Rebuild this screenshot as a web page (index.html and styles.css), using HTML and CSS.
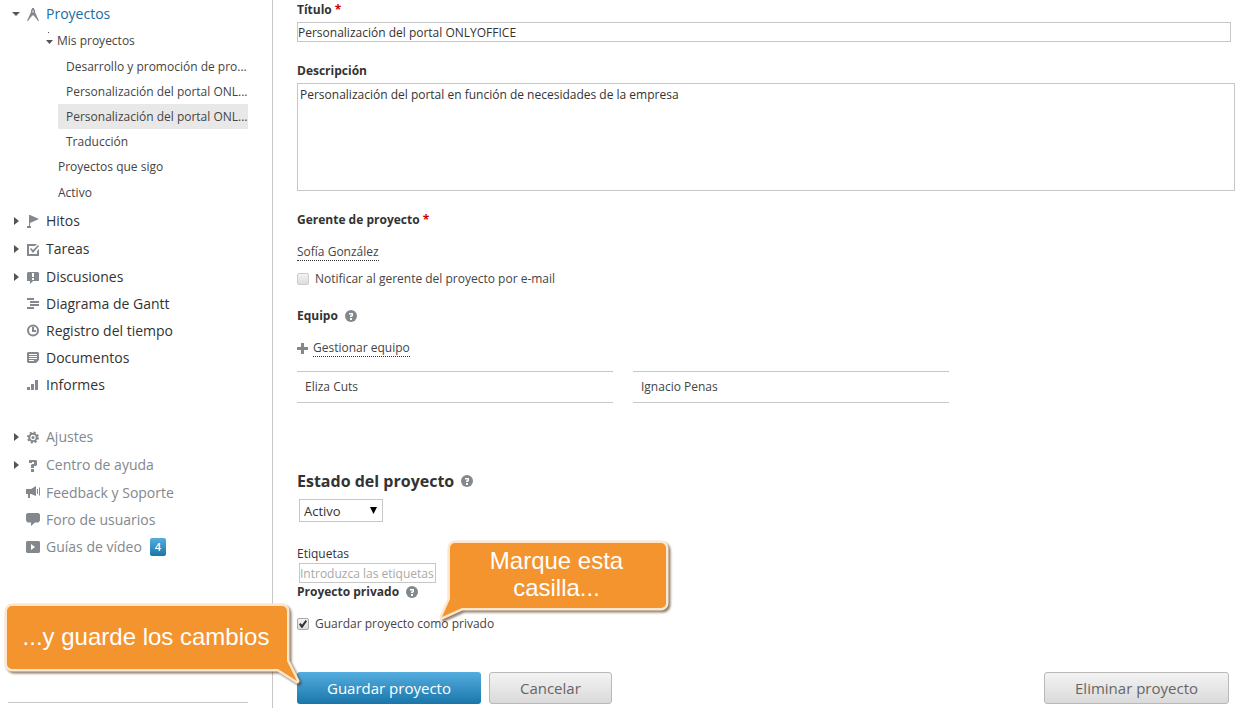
FILE: index.html
```html
<!DOCTYPE html>
<html lang="es">
  <head>
    <meta charset="UTF-8">
    <meta name="viewport" content="width=device-width">
    <title>Personalización del portal ONLYOFFICE</title>
    <link rel="stylesheet" href="styles.css">
  </head>
  <body>
    <aside class="sidebar">
      <nav>
        <ul class="menu">
          <li>
            <a class="item open current" href="#">
              <svg class="icon" viewBox="0 0 13 13"><path fill-rule="evenodd" d="M5 0h2v1l1 1v2l4 9h-1L8 9 6 7 4 9l-3 4H0l4-9V2l1-1zM5.500 2.500v2h1v-2z"/></svg>
              Proyectos
            </a>
            <ul class="submenu">
              <li>
                <a class="sub-toggle" href="#"><svg class="caret" viewBox="0 0 7 18"><path d="M2 0h1v1H2zM0 8h7l-3.500 4z"/></svg>Mis proyectos</a>
                <ul class="projects">
                  <li><a href="#">Desarrollo y promoción de pro...</a></li>
                  <li><a href="#">Personalización del portal ONL...</a></li>
                  <li><a class="selected" href="#">Personalización del portal ONL...</a></li>
                  <li><a href="#">Traducción</a></li>
                </ul>
              </li>
              <li><a class="filter" href="#">Proyectos que sigo</a></li>
              <li><a class="filter" href="#">Activo</a></li>
            </ul>
          </li>
          <li><a class="item closed" href="#"><svg class="icon" viewBox="0 0 13 13"><path d="M2 0h1l9 4-9 4v3h1v2H0v-2h2z"/></svg>Hitos</a></li>
          <li><a class="item closed" href="#"><svg class="icon" viewBox="0 0 13 13"><path d="M0 1h10L8 3H2v8h8V8l2-2v7H0z"/><path d="M3 6l1-1 2 2 5-5 1 1-6 7z"/></svg>Tareas</a></li>
          <li><a class="item closed" href="#"><svg class="icon" viewBox="0 0 13 13"><path fill-rule="evenodd" d="M1 1h10l1 1v8H6l-3 3v-3H0V2zM5 2v4h2V2zM5 7v2h2V7z"/></svg>Discusiones</a></li>
        </ul>
        <ul class="menu plain">
          <li><a class="item" href="#"><svg class="icon" viewBox="0 0 13 13"><path d="M0 1h7v2H0zM3 4h9v2H3zM3 7h9v2H3zM0 10h7v2H0z"/></svg>Diagrama de Gantt</a></li>
          <li><a class="item" href="#"><svg class="icon" viewBox="0 0 13 13"><circle class="ring" cx="6" cy="6.500" r="5"/><path d="M5 3h2v3h2v2H5z"/></svg>Registro del tiempo</a></li>
          <li><a class="item" href="#"><svg class="icon" viewBox="0 0 13 13"><path fill-rule="evenodd" d="M1 1h10l1 1v7l-3 3H1l-1-1V2zM2 3v1h8V3zM2 5v1h8V5zM2 7v1h8V7zM2 9v1h5V9z"/></svg>Documentos</a></li>
          <li><a class="item" href="#"><svg class="icon" viewBox="0 0 13 13"><path d="M0 9h3v3H0zM4 6h3v6H4zM8 2h3v10H8z"/></svg>Informes</a></li>
        </ul>
        <ul class="menu secondary">
          <li><a class="item closed" href="#"><svg class="icon" viewBox="0 0 13 13"><circle class="teeth" cx="6" cy="6.500" r="5"/><circle class="ring" cx="6" cy="6.500" r="3.700"/><circle cx="6" cy="6.500" r="1.500"/></svg>Ajustes</a></li>
          <li><a class="item closed" href="#"><svg class="icon" viewBox="0 0 13 13"><path d="M2 1h7l1 1v4L9 7H7v2H4V6l1-1h2V3H5v1H2zM4 10h3v3H4z"/></svg>Centro de ayuda</a></li>
          <li><a class="item" href="#"><svg class="icon wide" viewBox="0 0 14 13"><path d="M0 3h5l5-3v10L5 8H4v4H2V8H0z"/><path class="wave" d="M11.500 3v5M13.500 1.500v8"/></svg>Feedback y Soporte</a></li>
          <li><a class="item" href="#"><svg class="icon wide" viewBox="0 0 14 13"><path d="M1.500 0h11L14 1.500v6L12.500 9.500H9l-4 3.500V9.500H1.500L0 7.500v-6z"/></svg>Foro de usuarios</a></li>
          <li><a class="item" href="#"><svg class="icon wide" viewBox="0 0 14 13"><path fill-rule="evenodd" d="M1 1h12l1 1v10l-1 1H1l-1-1V2zM5 4v6l4-3z"/></svg>Guías de vídeo <span class="count">4</span></a></li>
        </ul>
      </nav>
      <div class="rule"></div>
      <p class="callout save"><svg viewBox="0 0 300 88"><path d="M9 3h270a5 5 0 0 1 5 5v50l10 20-19-12H9a5 5 0 0 1-5-5V8a5 5 0 0 1 5-5z"/></svg><span>...y guarde los cambios</span></p>
    </aside>

    <main class="content">
      <form>
        <label class="heading" for="title">Título <span class="required">*</span></label>
        <input class="text title" id="title" type="text" value="Personalización del portal ONLYOFFICE">

        <label class="heading" for="description">Descripción</label>
        <textarea class="text description" id="description">Personalización del portal en función de necesidades de la empresa</textarea>

        <h3 class="heading">Gerente de proyecto <span class="required">*</span></h3>
        <div class="line"><a class="dotted" href="#">Sofía González</a></div>
        <div class="check notify"><input id="notify" type="checkbox" disabled><label for="notify">Notificar al gerente del proyecto por e-mail</label></div>

        <h3 class="heading">Equipo <svg class="help" viewBox="0 0 12 12"><circle cx="6" cy="6" r="6"/><path d="M4 4.500V3h4v3L6.500 7H5V5.500h1.500v-1zM5 8h2v2H5z"/></svg></h3>
        <div class="line"><svg class="plus" viewBox="0 0 11 11"><path d="M4 0h3v4h4v3H7v4H4V7H0V4h4z"/></svg><a class="dotted" href="#">Gestionar equipo</a></div>
        <ul class="team">
          <li>Eliza Cuts</li>
          <li>Ignacio Penas</li>
        </ul>

        <h2 class="status-heading"><label for="status">Estado del proyecto</label> <svg class="help" viewBox="0 0 12 12"><circle cx="6" cy="6" r="6"/><path d="M4 4.500V3h4v3L6.500 7H5V5.500h1.500v-1zM5 8h2v2H5z"/></svg></h2>
        <div class="select">
          <select id="status">
            <option selected>Activo</option>
            <option>Pausado</option>
            <option>Cerrado</option>
          </select>
        </div>

        <label class="tags-label" for="tags">Etiquetas</label>
        <input class="text tags" id="tags" type="text" placeholder="Introduzca las etiquetas">

        <h3 class="heading private">Proyecto privado <svg class="help" viewBox="0 0 12 12"><circle cx="6" cy="6" r="6"/><path d="M4 4.500V3h4v3L6.500 7H5V5.500h1.500v-1zM5 8h2v2H5z"/></svg></h3>
        <div class="check line"><input id="private" type="checkbox" checked><label for="private">Guardar proyecto como privado</label></div>

        <div class="actions">
          <button class="button primary" type="submit">Guardar proyecto</button>
          <button class="button" type="button">Cancelar</button>
          <button class="button delete" type="button">Eliminar proyecto</button>
        </div>
      </form>
      <p class="callout tick"><svg viewBox="0 0 236 88"><path d="M19 3h206a5 5 0 0 1 5 5v55a5 5 0 0 1-5 5H26L6 77l8-18V8a5 5 0 0 1 5-5z"/></svg><span>Marque esta<br>casilla...</span></p>
    </main>
  </body>
</html>
```
FILE: styles.css
```css
* {
  box-sizing: border-box;
}
body {
  display: flex;
  min-height: 100vh;
  margin: 0;
  background: #fff;
  color: #333;
  font: 12px/18px "Open Sans", sans-serif;
}
ul {
  margin: 0;
  padding: 0;
  list-style: none;
}
a {
  color: inherit;
  text-decoration: none;
}
input, select, textarea, button {
  margin: 0;
  font: inherit;
  color: inherit;
}

/* Sidebar */
.sidebar {
  position: relative;
  flex: none;
  display: flex;
  flex-direction: column;
  width: 273px;
  padding: 0 24px 5px 8px;
  border-right: 1px solid #c7c7c7;
}
.item {
  display: flex;
  align-items: center;
  height: 27px;
  padding-left: 18px;
  font-size: 14px;
}
.item.open, .item.closed {
  height: 28px;
  padding-left: 4px;
}
.item.open::before, .item.closed::before {
  content: "";
  width: 8px;
  height: 4px;
  margin-right: 6px;
  background: #555;
  clip-path: polygon(0 0, 100% 0, 50% 100%);
}
.item.closed::before {
  width: 5px;
  height: 8px;
  margin: 0 7px 0 2px;
  clip-path: polygon(0 0, 100% 50%, 0 100%);
}
.current {
  color: #1a6da3;
}
.icon {
  width: 13px;
  height: 13px;
  margin: 0 6px 0 1px;
  fill: #83888d;
}
.icon.wide {
  width: 14px;
  margin-left: 0;
}
.icon .ring, .icon .teeth, .icon .wave {
  fill: none;
  stroke: #83888d;
  stroke-width: 2;
}
.icon .teeth {
  stroke-dasharray: 2 1.927;
}
.icon .wave {
  stroke-width: 1;
}
.submenu {
  margin-bottom: 1px;
  color: #444;
}
.sub-toggle {
  display: flex;
  align-items: center;
  height: 26px;
  padding-left: 38px;
}
.caret {
  width: 7px;
  height: 18px;
  margin-right: 4px;
  fill: #555;
}
.projects {
  margin-left: 50px;
}
.projects a {
  display: block;
  width: 190px;
  padding-left: 8px;
  line-height: 25px;
  white-space: nowrap;
}
.projects .selected {
  background: #e8e8e8;
}
.filter {
  display: block;
  padding-left: 50px;
  line-height: 26px;
}
.plain {
  margin-top: -1px;
}
.secondary {
  margin-top: 25px;
  color: #83888d;
}
.count {
  width: 16px;
  margin-left: 8px;
  border-radius: 2px;
  background: linear-gradient(#55addf, #1a76aa);
  color: #fff;
  font-size: 11px;
  font-weight: 600;
  line-height: 18px;
  text-align: center;
}
.rule {
  margin-top: auto;
  border-top: 1px solid #c7c7c7;
}

/* Form */
.content {
  position: relative;
  flex: 1;
  min-width: 0;
  padding: 1px 5px 4px 24px;
}
.heading {
  display: flex;
  align-items: center;
  margin: 20px 0 0;
  font-size: 12px;
  font-weight: 700;
}
.heading:first-child {
  margin-top: 0;
}
.required {
  margin-left: 3px;
  color: #c00;
}
.help {
  width: 12px;
  height: 12px;
  margin-left: 7px;
  fill: #83888d;
}
.help path {
  fill: #fff;
}
.text {
  display: block;
  border: 1px solid #c7c7c7;
  border-radius: 0;
  outline: 0;
  background: #fff;
}
.title {
  width: calc(100% - 4px);
  height: 20px;
  margin-top: 3px;
  padding: 0;
}
.description {
  width: 100%;
  height: 108px;
  margin-top: 3px;
  padding: 2px;
  resize: none;
}
.line {
  display: flex;
  align-items: center;
  margin-top: 14px;
}
.dotted {
  height: 18px;
  border-bottom: 1px dotted #333;
}
.plus {
  width: 11px;
  height: 11px;
  margin-right: 5px;
  fill: #83888d;
}
.check {
  display: flex;
  align-items: center;
}
.line, .check, .team {
  color: #444;
}
.notify {
  margin: 9px 0 -1px;
}
.check input {
  appearance: none;
  display: grid;
  place-items: center;
  width: 12px;
  height: 12px;
  margin-right: 6px;
  border: 1px solid #aaa;
  border-radius: 2px;
  background: linear-gradient(#f2f2f2, #ddd);
}
.check input:disabled {
  border-color: #ccc;
}
.check input:checked::before {
  content: "";
  width: 8px;
  height: 8px;
  background: #333;
  clip-path: polygon(0 55%, 18% 38%, 38% 58%, 82% 0, 100% 15%, 42% 100%, 32% 100%);
}
.team {
  display: grid;
  grid-template-columns: 1fr 1fr;
  gap: 20px;
  max-width: 652px;
  margin-top: 14px;
}
.team li {
  padding: 6px 8px;
  border: solid #c7c7c7;
  border-width: 1px 0;
}
.status-heading {
  display: flex;
  align-items: center;
  margin: 66px 0 6px;
  font-size: 16px;
  font-weight: 700;
  line-height: 24px;
}
.select {
  display: inline-grid;
  align-items: center;
  width: 84px;
  margin-left: 2px;
}
.select select {
  grid-area: 1 / 1;
  appearance: none;
  height: 23px;
  padding: 0 4px;
  border: 1px solid #c7c7c7;
  border-radius: 0;
  background: #fff;
  font-size: 13px;
}
.select::after {
  content: "";
  grid-area: 1 / 1;
  justify-self: end;
  width: 7px;
  height: 7px;
  margin-right: 6px;
  background: #000;
  clip-path: polygon(0 0, 100% 0, 50% 100%);
  pointer-events: none;
}
.tags-label {
  display: block;
  margin-top: 23px;
}
.tags {
  width: 137px;
  height: 20px;
  margin-left: 2px;
  padding: 0;
}
.tags::placeholder {
  color: #a9a9a9;
}
.private {
  margin-top: 0;
}
.actions {
  display: flex;
  gap: 8px;
  margin: 39px 6px 0 0;
}
.button {
  height: 32px;
  padding: 0 30px;
  border: 1px solid #b9b9b9;
  border-radius: 3px;
  background: linear-gradient(#f3f3f3, #dadada);
  color: #666;
  font-size: 15px;
}
.primary {
  border: 0;
  background: linear-gradient(#55addf, #1a76aa);
  color: #fff;
}
.delete {
  margin-left: auto;
}

/* Tutorial callouts */
.callout {
  position: absolute;
  z-index: 1;
  display: grid;
  margin: 0;
  color: #fff;
  font: 24px/27px "Liberation Sans", Arial, sans-serif;
  text-align: center;
}
.callout svg, .callout span {
  grid-area: 1 / 1;
}
.callout svg {
  width: 100%;
  height: 100%;
  fill: #f4942e;
  stroke: #fce6cc;
  stroke-width: 5;
  stroke-linejoin: round;
  paint-order: stroke;
  overflow: visible;
  filter: drop-shadow(2px 2px 1px rgb(70 40 10 / 60%));
}
.callout span {
  z-index: 1;
}
.save {
  top: 603px;
  left: 3px;
  width: 300px;
  height: 88px;
}
.save span {
  padding: 20px 14px 0 0;
}
.tick {
  top: 540px;
  left: 163px;
  width: 236px;
  height: 88px;
}
.tick span {
  padding: 7px 0 0 5px;
}
```
